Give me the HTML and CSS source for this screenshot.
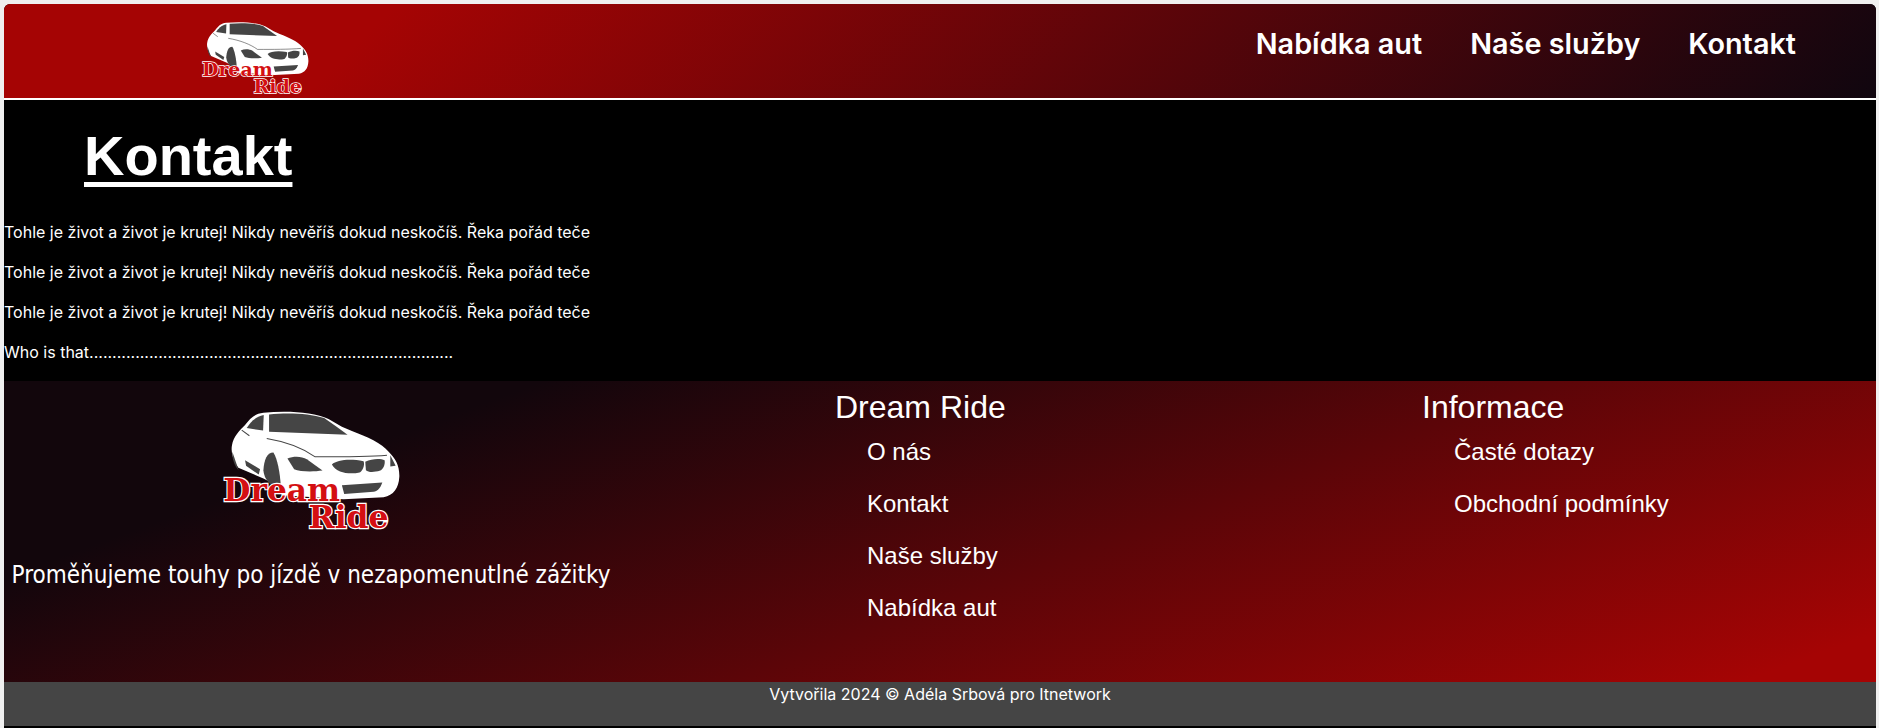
FILE: index.html
```html
<!DOCTYPE html>
<html lang="cs">
<head>
    <meta charset="UTF-8">
    <meta name="viewport" content="width=device-width, initial-scale=1.0">
    <title>Kontakt</title>
    <link rel="stylesheet" href="styles.css">
</head>
<body>
    <div class="page">
        <header class="top-bar">
            <a class="top-logo" href="#">
                <svg class="logo-small" viewBox="60 45 545 365">
                    <path class="car-body" d="M96 150 C100 125 120 105 135 90 C150 70 165 55 190 53 C260 47 340 50 385 72 L425 95 L455 108 C500 125 545 145 565 170 C585 190 598 210 597 245 C595 280 580 300 550 306 L430 312 L250 300 L238 275 L190 250 L115 218 C98 195 92 170 96 150 Z"/>
                    <path class="car-dark" d="M207 58 C260 53 325 54 372 69 L405 92 L442 119 L207 110 Z"/>
                    <path class="car-dark" d="M140 99 C150 82 165 66 191 60 L189 106 Z"/>
                    <path class="car-dark" d="M262 190 C280 182 305 183 320 192 L367 226 C340 230 300 230 282 222 Z"/>
                    <path class="car-dark" d="M395 208 C410 195 445 190 490 198 C495 212 485 228 478 232 C450 238 410 235 395 208 Z"/>
                    <path class="car-dark" d="M495 200 C515 190 540 190 553 195 C555 210 548 222 540 226 C520 232 505 232 497 225 Z"/>
                    <path class="car-dark" d="M570 180 L586 212 L570 214 Z"/>
                    <path class="car-dark" d="M425 270 L546 262 C540 280 530 288 520 290 L432 296 Z"/>
                    <path class="car-dark" d="M190 225 C192 195 200 172 220 172 C232 190 240 235 242 272 L215 270 C200 258 192 245 190 225 Z"/>
                    <path class="car-dark" d="M97 170 L116 226 C105 215 95 190 97 170 Z"/>
                    <path class="car-dark" d="M135 195 L180 222 L176 238 L138 212 Z"/>
                    <path class="car-line" d="M125 105 L148 122 M200 130 C260 140 310 160 345 185 C420 185 500 185 560 180"/>
                    <text class="logo-text" x="70" y="318" textLength="350" lengthAdjust="spacingAndGlyphs">Dream</text>
                    <text class="logo-text" x="325" y="399" textLength="240" lengthAdjust="spacingAndGlyphs">Ride</text>
                </svg>
            </a>
            <nav class="top-nav">
                <a href="#">Nabídka aut</a>
                <a href="#">Naše služby</a>
                <a href="#">Kontakt</a>
            </nav>
        </header>

        <main class="content">
            <h1>Kontakt</h1>
            <p>Tohle je život a život je krutej! Nikdy nevěříš dokud neskočíš. Řeka pořád teče</p>
            <p>Tohle je život a život je krutej! Nikdy nevěříš dokud neskočíš. Řeka pořád teče</p>
            <p>Tohle je život a život je krutej! Nikdy nevěříš dokud neskočíš. Řeka pořád teče</p>
            <p>Who is that...............................................................................</p>
        </main>

        <footer class="bottom">
            <div class="bottom-brand">
                <svg class="logo-big" viewBox="60 45 545 365">
                    <path class="car-body" d="M96 150 C100 125 120 105 135 90 C150 70 165 55 190 53 C260 47 340 50 385 72 L425 95 L455 108 C500 125 545 145 565 170 C585 190 598 210 597 245 C595 280 580 300 550 306 L430 312 L250 300 L238 275 L190 250 L115 218 C98 195 92 170 96 150 Z"/>
                    <path class="car-dark" d="M207 58 C260 53 325 54 372 69 L405 92 L442 119 L207 110 Z"/>
                    <path class="car-dark" d="M140 99 C150 82 165 66 191 60 L189 106 Z"/>
                    <path class="car-dark" d="M262 190 C280 182 305 183 320 192 L367 226 C340 230 300 230 282 222 Z"/>
                    <path class="car-dark" d="M395 208 C410 195 445 190 490 198 C495 212 485 228 478 232 C450 238 410 235 395 208 Z"/>
                    <path class="car-dark" d="M495 200 C515 190 540 190 553 195 C555 210 548 222 540 226 C520 232 505 232 497 225 Z"/>
                    <path class="car-dark" d="M570 180 L586 212 L570 214 Z"/>
                    <path class="car-dark" d="M425 270 L546 262 C540 280 530 288 520 290 L432 296 Z"/>
                    <path class="car-dark" d="M190 225 C192 195 200 172 220 172 C232 190 240 235 242 272 L215 270 C200 258 192 245 190 225 Z"/>
                    <path class="car-dark" d="M97 170 L116 226 C105 215 95 190 97 170 Z"/>
                    <path class="car-dark" d="M135 195 L180 222 L176 238 L138 212 Z"/>
                    <path class="car-line" d="M125 105 L148 122 M200 130 C260 140 310 160 345 185 C420 185 500 185 560 180"/>
                    <text class="logo-text" x="70" y="318" textLength="350" lengthAdjust="spacingAndGlyphs">Dream</text>
                    <text class="logo-text" x="325" y="399" textLength="240" lengthAdjust="spacingAndGlyphs">Ride</text>
                </svg>
                <p class="motto">Proměňujeme touhy po jízdě v nezapomenutlné zážitky</p>
            </div>
            <div class="bottom-col">
                <h3>Dream Ride</h3>
                <ul>
                    <li><a href="#">O nás</a></li>
                    <li><a href="#">Kontakt</a></li>
                    <li><a href="#">Naše služby</a></li>
                    <li><a href="#">Nabídka aut</a></li>
                </ul>
            </div>
            <div class="bottom-col">
                <h3>Informace</h3>
                <ul>
                    <li><a href="#">Časté dotazy</a></li>
                    <li><a href="#">Obchodní podmínky</a></li>
                </ul>
            </div>
        </footer>

        <div class="copyright">Vytvořila 2024 © Adéla Srbová pro Itnetwork</div>
    </div>
</body>
</html>
```

FILE: styles.css
```css
/* Zaklad */
body {
    margin: 0;
    padding: 4px 3px 0 4px;
    background-color: #f0f0f0;
    font-family: 'Inter', sans-serif;
    color: #ffffff;
}

a {
    color: #ffffff;
    text-decoration: none;
}

.page {
    background-color: #000000;
    border-radius: 6px 6px 0 0;
    overflow: hidden;
    padding-bottom: 2px;
}

/* Hlavicka */
.top-bar {
    height: 94px;
    display: flex;
    justify-content: space-between;
    background: linear-gradient(135deg, #a50404 20%, #10060f);
    border-bottom: 2px solid #ffffff;
}

.top-logo {
    margin: 17px 0 0 196px;
}

.logo-small {
    display: block;
    width: 110px;
    height: 74px;
    overflow: visible;
}

.top-nav {
    display: flex;
    gap: 48px;
    padding: 23px 80px 0 0;
    font-size: 28.8px;
    font-weight: 600;
    line-height: 34px;
}

/* Logo */
.car-body {
    fill: #ffffff;
}

.car-dark {
    fill: #454545;
}

.car-line {
    fill: none;
    stroke: #454545;
    stroke-width: 3;
}

.logo-text {
    font-family: 'DejaVu Serif', serif;
    font-size: 94px;
    font-weight: bold;
    fill: #d40f12;
    stroke: #ffffff;
    stroke-width: 7px;
    paint-order: stroke;
}

/* Obsah */
.content {
    height: 281px;
}

.content h1 {
    margin: 0 0 0 80px;
    padding-top: 24px;
    font-family: 'Liberation Sans', sans-serif;
    font-size: 56px;
    line-height: 64px;
    font-weight: bold;
    text-decoration: underline;
    text-decoration-thickness: 5px;
    text-underline-offset: 7px;
}

.content p {
    margin: 0 0 20px;
    font-size: 16px;
    line-height: 20px;
}

.content h1 + p {
    margin-top: 34px;
}

/* Paticka */
.bottom {
    height: 301px;
    display: grid;
    grid-template-columns: 831px 587px 1fr;
    background: linear-gradient(160deg, #12060c 20%, #a50404 95%);
    font-family: 'Liberation Sans', sans-serif;
}

.bottom-brand {
    width: 614px;
    display: flex;
    flex-direction: column;
    align-items: center;
    padding-top: 29px;
}

.logo-big {
    display: block;
    width: 182px;
    height: 122px;
    overflow: visible;
}

.motto {
    margin: 28px 0 0;
    font-family: 'DejaVu Sans Condensed', 'DejaVu Sans', sans-serif;
    font-stretch: condensed;
    font-size: 24px;
    line-height: 30px;
    white-space: nowrap;
}

.bottom-col h3 {
    margin: 8px 0 0;
    font-size: 32px;
    line-height: 37px;
    font-weight: normal;
}

.bottom-col ul {
    list-style: none;
    margin: 0;
    padding: 0 0 0 32px;
}

.bottom-col li {
    font-size: 24px;
    line-height: 28px;
    margin-top: 24px;
}

.bottom-col li:first-child {
    margin-top: 12px;
}

.copyright {
    height: 44px;
    background-color: #454545;
    text-align: center;
    font-size: 16px;
    line-height: 24px;
}
```
